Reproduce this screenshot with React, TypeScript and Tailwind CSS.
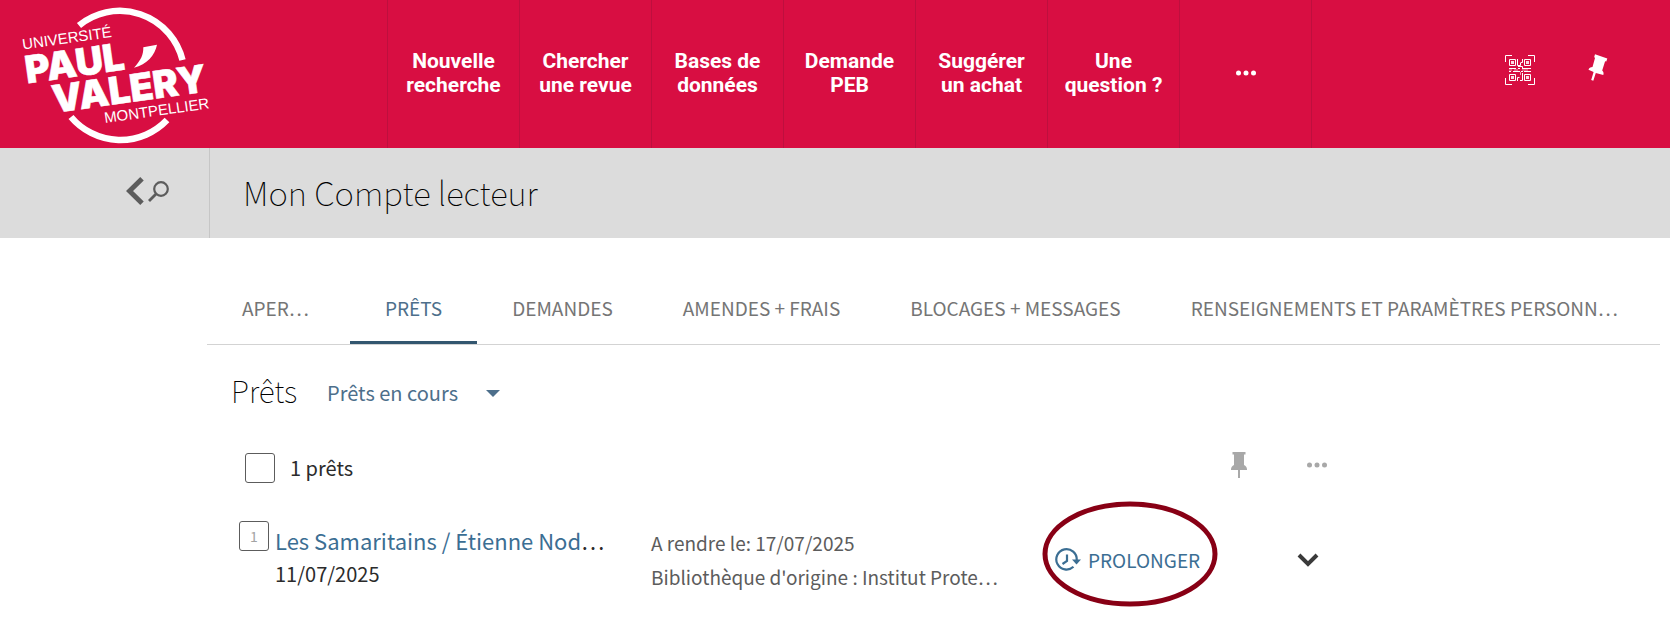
import type { ReactNode } from "react";

const NAV_ITEMS = [
  ["Nouvelle", "recherche"],
  ["Chercher", "une revue"],
  ["Bases de", "données"],
  ["Demande", "PEB"],
  ["Suggérer", "un achat"],
  ["Une", "question ?"],
];

const TABS = [
  { label: "APER…", width: "w-[143px]" },
  { label: "PRÊTS", active: true },
  { label: "DEMANDES" },
  { label: "AMENDES + FRAIS" },
  { label: "BLOCAGES + MESSAGES" },
  { label: "RENSEIGNEMENTS ET PARAMÈTRES PERSONN…" },
];

function Logo() {
  return (
    <svg
      width="220"
      height="148"
      viewBox="0 0 220 148"
      fill="#fff"
      role="img"
      aria-label="Université Paul-Valéry Montpellier"
    >
      <g fill="none" stroke="#fff" strokeWidth="6.5">
        <path d="M79 25.500A64.500 64.500 0 0 1 182.500 60" />
        <path d="M71 117A64.500 64.500 0 0 0 167 120" />
      </g>
      <path d="M143.300 47.300L157 44.700C155 55 147 64.500 134 67.700C141 60 143.500 55 143.300 47.300Z" />
      <g fontFamily="Liberation Sans, sans-serif" fontSize="15">
        <text transform="translate(23 49.500) rotate(-8)">UNIVERSITÉ</text>
        <text transform="translate(105 123) rotate(-8)">MONTPELLIER</text>
      </g>
      <g fontFamily="Inter, sans-serif" fontWeight="900" fontSize="38" stroke="#fff" strokeWidth=".5">
        <text transform="translate(27 83.500) rotate(-8)">PAUL</text>
        <text transform="translate(54 113) rotate(-8)">VALERY</text>
      </g>
    </svg>
  );
}

function Dots({ className }: { className: string }) {
  return (
    <svg width="20" height="6" viewBox="0 0 20 6" className={className}>
      <circle cx="2.500" cy="3" r="2.500" />
      <circle cx="10" cy="3" r="2.500" />
      <circle cx="17.500" cy="3" r="2.500" />
    </svg>
  );
}

function QrIcon() {
  return (
    <svg width="30" height="30" viewBox="0 0 30 30" fill="none" stroke="#fff">
      <path d="M.5 7V.5H7M23 .5h6.500V7M29.500 23v6.500H23M7 29.500H.5V23" />
      <path d="M4.500 4.500h6v6h-6zM19.500 4.500h6v6h-6zM4.500 19.500h6v6h-6zM19.500 19.500h6v6h-6z" />
      <path
        d="M6 6h3v3H6zM21 6h3v3h-3zM6 21h3v3H6zM21 21h3v3h-3z"
        fill="#fff"
        fillOpacity=".85"
        stroke="none"
      />
      <path d="M12.500 4v6.500h3V8M15.500 7.500h2V4M13 11.500h4.500V14M12.500 26v-3.500h2M17.500 18v7.500H15" />
      <path d="M4 13.500h7M13 13.500h2M18 13.500h8M4 16.500h2M8 16.500h7M16 16.500h2M19 16.500h7" />
      <path d="M4 15h3M9 15h4M17 15h6M15.500 17v3" strokeOpacity=".6" />
    </svg>
  );
}

function PinIcon({ className }: { className: string }) {
  return (
    <svg width="16" height="26" viewBox="0 0 16 26" className={className}>
      <path d="M1.500 0h13v2.500H13v10.500c1.800.8 3 2.400 3 4.500v.5H9v8H7v-8H0v-.5c0-2.100 1.200-3.700 3-4.500V2.500H1.500z" />
    </svg>
  );
}

function TiltedPinIcon() {
  return (
    <svg width="20" height="27" viewBox="0 0 20 27" fill="#fff">
      <path d="M7 .3L19.300 4.500l-1 3-1.200-.2-2.900 9.200c1.300 1.200 1.700 2.600 1.100 4.600L7.800 19 5.300 26.700l-2.100-.7L5.600 18 .5 15.800c.5-1.800 2-2.800 4-2.800L7 4 6.200 3z" />
    </svg>
  );
}

function RenewIcon() {
  return (
    <svg width="26" height="24" viewBox="0 0 26 24" fill="none" stroke="#3b6e93" strokeWidth="2.200">
      <path d="M18.500 18.800A10.200 10.200 0 1 1 21.700 12" />
      <path d="M12 6.500V13l-4.500 3" />
      <path d="M17 11.500h9l-4.500 5z" fill="#3b6e93" stroke="none" />
    </svg>
  );
}

function IconButton({ label, children }: { label: string; children: ReactNode }) {
  return (
    <button type="button" aria-label={label} className="flex h-8 w-8 items-center justify-center">
      {children}
    </button>
  );
}

function Header() {
  return (
    <header className="flex h-[148px] bg-[#d80e42] text-white">
      <a href="#accueil" className="w-[387px] shrink-0">
        <Logo />
      </a>
      <nav className="flex border-l border-[#be0f3e] font-[Roboto,sans-serif] text-[21px] leading-6 font-bold">
        {NAV_ITEMS.map(([first, second]) => (
          <a
            key={first}
            href="#menu"
            className="flex w-[132px] flex-col items-center justify-center border-r border-[#be0f3e] pb-0.5"
          >
            <span>{first}</span>
            <span>{second}</span>
          </a>
        ))}
        <button
          type="button"
          aria-label="Plus"
          className="flex w-[132px] items-center justify-center border-r border-[#be0f3e] pb-0.5"
        >
          <Dots className="fill-white" />
        </button>
      </nav>
      <div className="ml-auto flex items-start gap-[46px] pt-[54px] pr-14">
        <IconButton label="Scanner un code QR">
          <QrIcon />
        </IconButton>
        <button type="button" aria-label="Mes favoris" className="flex w-8 justify-center">
          <TiltedPinIcon />
        </button>
      </div>
    </header>
  );
}

function TitleBar() {
  return (
    <div className="flex h-[90px] bg-[#dcdcdc]">
      <div className="flex w-[210px] shrink-0 items-center justify-end border-r border-[#c6c6c6] pr-10 pb-1">
        <button type="button" aria-label="Retour à la recherche" className="flex items-center gap-1">
          <svg width="18" height="28" viewBox="0 0 18 28" fill="none" stroke="#5c5c5c" strokeWidth="5">
            <path d="M16 1.800L3.500 14L16 26.200" />
          </svg>
          <svg width="21" height="21" viewBox="0 0 21 21" fill="none" stroke="#5c5c5c" strokeWidth="2.200">
            <circle cx="13" cy="8" r="6.800" />
            <path d="M8 13L1 20" strokeWidth="2.800" />
          </svg>
        </button>
      </div>
      <h1 className="flex items-center pb-0.5 pl-[33px] text-[33px] leading-10 font-thin text-black">
        Mon Compte lecteur
      </h1>
    </div>
  );
}

function Tabs() {
  return (
    <div role="tablist" className="flex border-b border-[#d3d3d3] text-[19px] leading-6 text-[#757575]">
      {TABS.map((tab) => (
        <button
          key={tab.label}
          type="button"
          role="tab"
          aria-selected={!!tab.active}
          className={`h-[66px] shrink-0 border-b-3 px-[35px] pb-1 text-left whitespace-nowrap ${tab.width ?? ""} ${
            tab.active ? "border-[#33566f] text-[#4d6f8b]" : "border-transparent"
          }`}
        >
          {tab.label}
        </button>
      ))}
    </div>
  );
}

function LoanRow() {
  return (
    <div className="flex">
      <div className="flex w-[420px] shrink-0 gap-1.5 pl-2">
        <label className="relative flex h-[30px] w-[30px] shrink-0">
          <input
            type="checkbox"
            aria-label="Sélectionner le prêt 1"
            className="h-[30px] w-[30px] appearance-none rounded-[3px] border border-[#5c5c5c]"
          />
          <span className="absolute inset-0 text-center text-sm leading-[30px] text-[#a3a3a3]">1</span>
        </label>
        <div className="pt-[3px] whitespace-nowrap text-[#2b2b2b]">
          <h3 className="text-[22px] leading-8">
            <a href="#pret" className="text-[#3b6e93]">
              Les Samaritains / Étienne Nod
            </a>
            …
          </h3>
          <p className="text-xl leading-9">11/07/2025</p>
        </div>
      </div>
      <div className="w-[400px] shrink-0 pt-[5px] text-[19px] leading-[34px] whitespace-nowrap text-[#5c5c5c]">
        <p>A rendre le: 17/07/2025</p>
        <p>Bibliothèque d'origine : Institut Prote…</p>
      </div>
      <div className="relative w-[241px] shrink-0 pt-[23px]">
        <button type="button" className="flex items-center gap-[7px] pl-1 text-[19px] leading-8 text-[#3b6e93]">
          <RenewIcon />
          PROLONGER
        </button>
        <svg
          className="pointer-events-none absolute -top-5 -left-[9px]"
          width="176"
          height="106"
          viewBox="0 0 176 106"
          fill="none"
          stroke="#880015"
          strokeWidth="5"
        >
          <ellipse cx="88" cy="53" rx="85" ry="50" />
        </svg>
      </div>
      <div className="pt-[23px]">
        <IconButton label="Afficher les détails">
          <svg width="22" height="14" viewBox="0 0 22 14" fill="none" stroke="#3a3a3a" strokeWidth="4">
            <path d="M2 2l9 9l9-9" />
          </svg>
        </IconButton>
      </div>
    </div>
  );
}

export default function App() {
  return (
    <div className="min-h-screen overflow-x-hidden bg-white font-['Noto_Sans_CJK_SC','Noto_Sans',sans-serif]">
      <Header />
      <TitleBar />
      <main className="pt-10 pr-[10px] pl-[207px]">
        <Tabs />
        <section className="pl-6">
          <div className="flex h-[108px] items-start pt-6">
            <h2 className="w-24 text-[30px] leading-[42px] font-thin text-black">Prêts</h2>
            <button type="button" className="flex items-center gap-7 text-xl leading-[48px] text-[#4d6f8b]">
              Prêts en cours
              <svg width="14" height="7" viewBox="0 0 14 7" fill="#4d6f8b">
                <path d="M0 0h14L7 7z" />
              </svg>
            </button>
          </div>
          <div className="flex h-[68px] items-start pl-[14px]">
            <label className="flex items-center gap-[15px] text-xl leading-[30px] text-[#2b2b2b]">
              <input
                type="checkbox"
                className="h-[30px] w-[30px] appearance-none rounded-[3px] border border-[#5c5c5c]"
              />
              1 prêts
            </label>
            <div className="-mt-1 ml-[870px] flex gap-[46px]">
              <IconButton label="Ajouter aux favoris">
                <PinIcon className="fill-[#a8a8a8]" />
              </IconButton>
              <IconButton label="Plus d'actions">
                <Dots className="fill-[#a8a8a8]" />
              </IconButton>
            </div>
          </div>
          <LoanRow />
        </section>
      </main>
    </div>
  );
}
